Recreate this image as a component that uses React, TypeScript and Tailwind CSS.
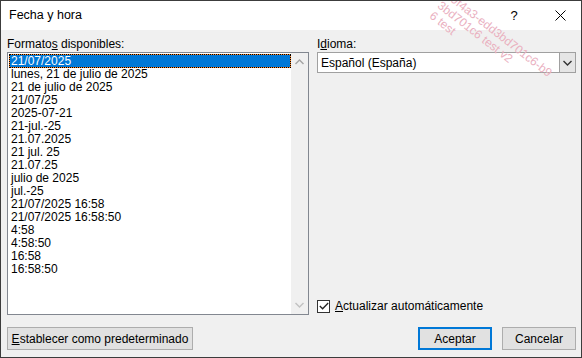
import React from "react"

const formats = [
    "21/07/2025",
    "lunes, 21 de julio de 2025",
    "21 de julio de 2025",
    "21/07/25",
    "2025-07-21",
    "21-jul.-25",
    "21.07.2025",
    "21 jul. 25",
    "21.07.25",
    "julio de 2025",
    "jul.-25",
    "21/07/2025 16:58",
    "21/07/2025 16:58:50",
    "4:58",
    "4:58:50",
    "16:58",
    "16:58:50",
]

function Chevron({ up, color }: { up?: boolean; color: string }) {
    return (
        <svg width="9" height="6" viewBox="0 0 9 6">
            <path d={up ? "M0.5 5 L4.5 1 L8.5 5" : "M0.5 1 L4.5 5 L8.5 1"} fill="none" stroke={color} strokeWidth="1.4" />
        </svg>
    )
}

export default function App() {
    return (
        <div className="relative w-[582px] h-[358px] overflow-hidden border border-[#3c3c3c] flex flex-col text-[12px] text-black font-['Liberation_Sans',Arial,sans-serif]">
            {/* Title bar */}
            <div className="h-[29px] bg-white flex items-center shrink-0">
                <div className="pl-[8px] flex-1 text-[12.5px]">Fecha y hora</div>
                <div className="w-[20px] text-center text-[13px] mr-[31px]">?</div>
                <svg width="11" height="11" viewBox="0 0 11 11" className="mr-[15px]">
                    <path d="M0.5 0.5 L10.5 10.5 M10.5 0.5 L0.5 10.5" stroke="#000" strokeWidth="1" />
                </svg>
            </div>

            {/* Body */}
            <div className="flex-1 bg-[#f0f0f0] pl-[6px] pr-[5px] flex flex-col">
                <div className="flex">
                    {/* Left column */}
                    <div className="w-[302px] flex flex-col">
                        <div className="h-[16px] mt-[6px] leading-[16px]">
                            Formato<span className="underline">s</span> disponibles:
                        </div>
                        <div className="h-[263px] border border-[#828790] bg-white flex">
                            <div className="flex-1 pt-px pl-px">
                                {formats.map((f, i) =>
                                    i === 0 ? (
                                        <div key={f} className="h-[14px] border border-dotted border-black bg-[#ff8728]">
                                            <div className="h-full bg-[#0078d7] text-white leading-[12px] pl-[1px]">{f}</div>
                                        </div>
                                    ) : (
                                        <div key={f} className="h-[13px] leading-[13px] pl-[2px] whitespace-nowrap">{f}</div>
                                    )
                                )}
                            </div>
                            <div className="w-[17px] bg-[#f0f0f0] flex flex-col justify-between items-center py-[6px]">
                                <Chevron up color="#a3a3a3" />
                                <Chevron color="#c2c2c2" />
                            </div>
                        </div>
                    </div>

                    {/* Right column */}
                    <div className="flex-1 ml-[8px] flex flex-col">
                        <div className="h-[16px] mt-[6px] leading-[16px]">
                            I<span className="underline">d</span>ioma:
                        </div>
                        <div className="h-[21px] border border-[#a0a0a0] bg-white flex items-stretch">
                            <div className="flex-1 pl-[3px] flex items-center">Español (España)</div>
                            <div className="w-[16px] bg-[#e5e5e5] border-l border-[#a0a0a0] flex items-center justify-center">
                                <Chevron color="#333" />
                            </div>
                        </div>
                        <div className="flex-1" />
                        <div className="flex items-center mb-[0px]">
                            <div className="w-[13px] h-[13px] border border-[#333] bg-white flex items-center justify-center">
                                <svg width="10" height="8" viewBox="0 0 10 8">
                                    <path d="M0.8 4 L3.6 6.8 L9.2 1" fill="none" stroke="#222" strokeWidth="1.3" />
                                </svg>
                            </div>
                            <div className="ml-[5px]">
                                <span className="underline">A</span>ctualizar automáticamente
                            </div>
                        </div>
                    </div>
                </div>

                {/* Buttons */}
                <div className="flex mt-[12px]">
                    <button className="w-[186px] h-[23px] bg-[#e1e1e1] border border-[#adadad] text-[12px]">
                        <span className="underline">E</span>stablecer como predeterminado
                    </button>
                    <div className="flex-1" />
                    <button className="w-[74px] h-[23px] bg-[#e1e1e1] border-2 border-[#0078d7] text-[12px]">
                        Aceptar
                    </button>
                    <button className="w-[74px] h-[23px] bg-[#e1e1e1] border border-[#adadad] ml-[10px] text-[12px]">
                        Cancelar
                    </button>
                </div>
            </div>

            {/* Watermark */}
            <div className="absolute left-[450px] top-[-12px] rotate-[38deg] origin-top-left text-[#eab0bf] text-[12px] leading-[13px] pointer-events-none whitespace-nowrap">
                <div>e9f4a3-edd3bd701c6-b9</div>
                <div>3bd701c6 test v2</div>
                <div>6 test</div>
            </div>
        </div>
    )
}
